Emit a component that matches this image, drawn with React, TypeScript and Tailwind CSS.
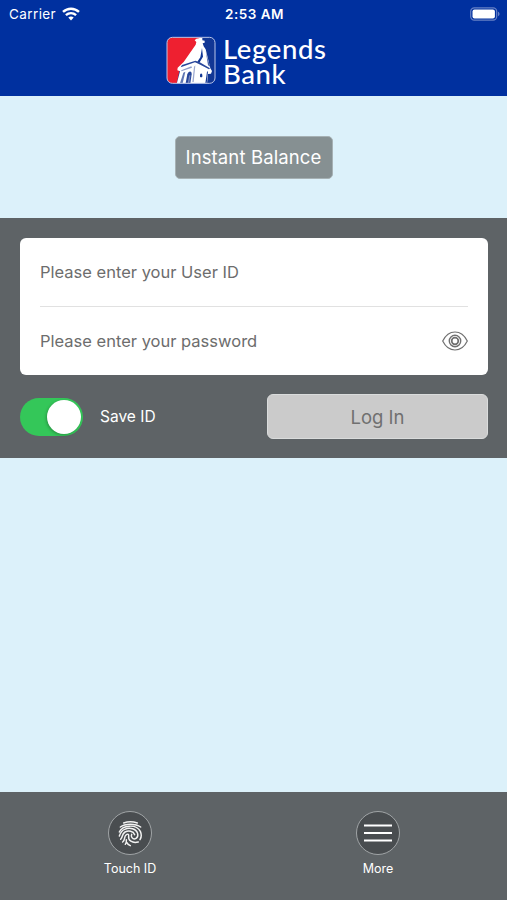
import type { ReactNode } from "react";

function WifiIcon() {
  return (
    <svg width="18" height="14" viewBox="0 0 18 14" fill="none" stroke="white" strokeWidth="2.4">
      <path d="M1 4.9C5.6.6 12.4.6 17 4.9" />
      <path d="M3.9 8.2c3-2.7 7.2-2.7 10.2 0" />
      <path d="M6.300 10.500c1.600-1.400 3.800-1.400 5.400 0L9 13.400z" fill="white" stroke="none" />
    </svg>
  );
}

function BatteryIcon() {
  return (
    <svg width="30" height="14" viewBox="0 0 30 14" fill="none">
      <rect x="0.7" y="0.8" width="26" height="12.4" rx="3.6" stroke="#6680c5" strokeWidth="1.2" />
      <rect x="2.5" y="2.5" width="22.4" height="9" rx="2" fill="white" />
      <path d="M28 4.8c2 .7 2 3.7 0 4.4z" fill="#6680c5" />
    </svg>
  );
}

function BankMark() {
  return (
    <svg width="50" height="48" viewBox="0 0 150 144">
      <defs>
        <clipPath id="mark">
          <rect x="3" y="4" width="144" height="138" rx="16" />
        </clipPath>
      </defs>
      <g clipPath="url(#mark)">
        <rect width="150" height="144" fill="#123795" />
        <path d="M0 0H106L84 54 42 96 32 144H0z" fill="#ee2030" />
        <path d="M101 6h8v7l7 1v6l-6 2 3 9 6 9 14 57 5 8-3 8-9 1-3 30H32l10-38-8-3 1-8 18-17 36-52 2-8-5-5 5-5 8-1z" fill="white" />
        <path d="M108 36 103 64 94 77 101 79 111 62z" fill="#123795" />
        <path d="M119 44 126 72 133 92 126 88z" fill="#4b64a9" />
        <path d="M48 87 88 74 100 78 132 97 129 100 97 83 87 79 44 94z" fill="#29479b" />
        <path d="M46 103 76 91 78 95 46 106z" fill="#8c9bc9" />
        <path d="M52 110 58 107 50 142H42z" fill="#5f76b3" />
        <path d="M59 142 64 115c4-12 14-11 13 0l-4 27z" fill="#27469a" />
        <path d="M65 142 69 121c2-6 5-5 4 0l-3 21z" fill="#7384ba" />
        <path d="M84 92 88 88 83 138H79z" fill="#9ba8cf" />
        <path d="M102 116q3.500-7 7 0v6q-3.500 4-7 0zM123 107 126 106 122 142H118z" fill="#123795" />
      </g>
      <rect x="3" y="4" width="144" height="138" rx="16" fill="none" stroke="#b9c5e8" strokeWidth="3" />
    </svg>
  );
}

function EyeIcon() {
  return (
    <svg width="26" height="20" viewBox="0 0 26 20" fill="none" stroke="#707070">
      <path d="M.7 10C3.500 4.300 8 1 13 1s9.500 3.300 12.300 9C22.500 15.700 18 19 13 19S3.500 15.700.7 10z" strokeWidth="1.200" />
      <circle cx="13" cy="10" r="5.700" strokeWidth="1.400" />
      <circle cx="13" cy="10" r="3.300" strokeWidth="1.700" />
    </svg>
  );
}

function FingerprintIcon() {
  return (
    <svg width="25" height="27" viewBox="84 117 75 81" fill="none" stroke="#f2f2f2" strokeWidth="4.4" strokeLinecap="round">
      <path d="M101 126Q121 118 142 126" />
      <path d="M91 138C105 127 137 127 152 138" />
      <path d="M88 153C97 132 139 128 151 151C155 160 155 168 150 176" />
      <path d="M88 165C91 156 96 148 104 145C119 138 139 143 143 158C146 171 133 179 126 170C123 166 124 162 125 160" />
      <path d="M92 175C99 168 95 159 105 153C115 148 130 149 134 161" />
      <path d="M98 183C107 176 101 168 108 162C114 157 117 160 116 166C114 177 126 188 145 183" />
      <path d="M106 190C109 186 110 182 109 176M121 194C116 192 112 188 110 184" />
    </svg>
  );
}

function MenuIcon() {
  return (
    <svg width="30" height="20" viewBox="0 0 30 20" stroke="white" strokeWidth="2">
      <path d="M1 2.500h28M1 10h28M1 17.500h28" />
    </svg>
  );
}

function TabItem({ label, children }: { label: string; children: ReactNode }) {
  return (
    <button className="flex w-[60px] flex-col items-center">
      <span className="flex size-[44px] items-center justify-center rounded-full border-[1.500px] border-[#a0a4a6] bg-[#494d50]">
        {children}
      </span>
      <span className="mt-[5px] text-[12.500px] leading-[18px] whitespace-nowrap text-white">{label}</span>
    </button>
  );
}

export default function App() {
  return (
    <div className="flex h-[900px] w-[507px] flex-col overflow-hidden bg-[#dcf1fa] font-['Inter','Liberation_Sans',sans-serif]">
      <header className="h-[96px] shrink-0 bg-[#00309f] text-white">
        <div className="grid h-[27px] grid-cols-3 items-center pr-[7px] pl-[9px] text-[13.500px]">
          <div className="flex items-center gap-[6px] pt-[1px]">
            <span className="tracking-[0.400px]">Carrier</span>
            <WifiIcon />
          </div>
          <span className="pt-[1px] text-center text-[13.500px] font-semibold tracking-[0.500px]">2:53 AM</span>
          <div className="flex justify-end">
            <BatteryIcon />
          </div>
        </div>
        <div className="flex pt-[9px] pl-[166px]">
          <BankMark />
          <div className="ml-[7px] font-['Lato','Liberation_Sans',sans-serif] text-[27.500px] leading-[25px] font-medium tracking-[0.600px]">
            <div>Legends</div>
            <div>Bank</div>
          </div>
        </div>
      </header>

      <div className="flex h-[122px] shrink-0 items-center justify-center pt-[1px]">
        <button className="h-[43px] w-[158px] rounded-[5px] border border-[#a6b1b4] bg-[#869092] text-[18.500px] tracking-[0.120px] whitespace-nowrap text-white">
          Instant Balance
        </button>
      </div>

      <section className="h-[240px] shrink-0 bg-[#5e6366] px-5 pt-[20px]">
        <div className="h-[137px] w-[467.500px] rounded-[6px] bg-white px-5 text-[16.500px] text-[#6d6d6d]">
          <div className="flex h-[69px] items-center border-b border-[#e1e1e1]">
            <span>Please enter your User ID</span>
          </div>
          <div className="flex h-[68px] items-center justify-between">
            <span>Please enter your password</span>
            <EyeIcon />
          </div>
        </div>
        <div className="mt-[19px] flex h-[45px] w-[468px] items-center">
          <div className="flex h-[38px] w-[63px] items-center justify-end rounded-full bg-[#34c759] pr-[2px]">
            <div className="size-[34px] rounded-full bg-white shadow-[-1px_1px_3px_rgba(0,0,0,0.25)]" />
          </div>
          <span className="ml-[17px] pt-[1px] text-[15.500px] text-white">Save ID</span>
          <button className="ml-auto h-[45px] w-[221px] rounded-[6px] border border-[#dadcdc] bg-[#cbcbcb] pt-[2px] text-[18.500px] text-[#707070]">
            Log In
          </button>
        </div>
      </section>

      <main className="flex-1" />

      <nav className="flex h-[108px] shrink-0 justify-between bg-[#5e6366] pt-[19px] pr-[99px] pl-[100px]">
        <TabItem label="Touch ID">
          <FingerprintIcon />
        </TabItem>
        <TabItem label="More">
          <MenuIcon />
        </TabItem>
      </nav>
    </div>
  );
}
